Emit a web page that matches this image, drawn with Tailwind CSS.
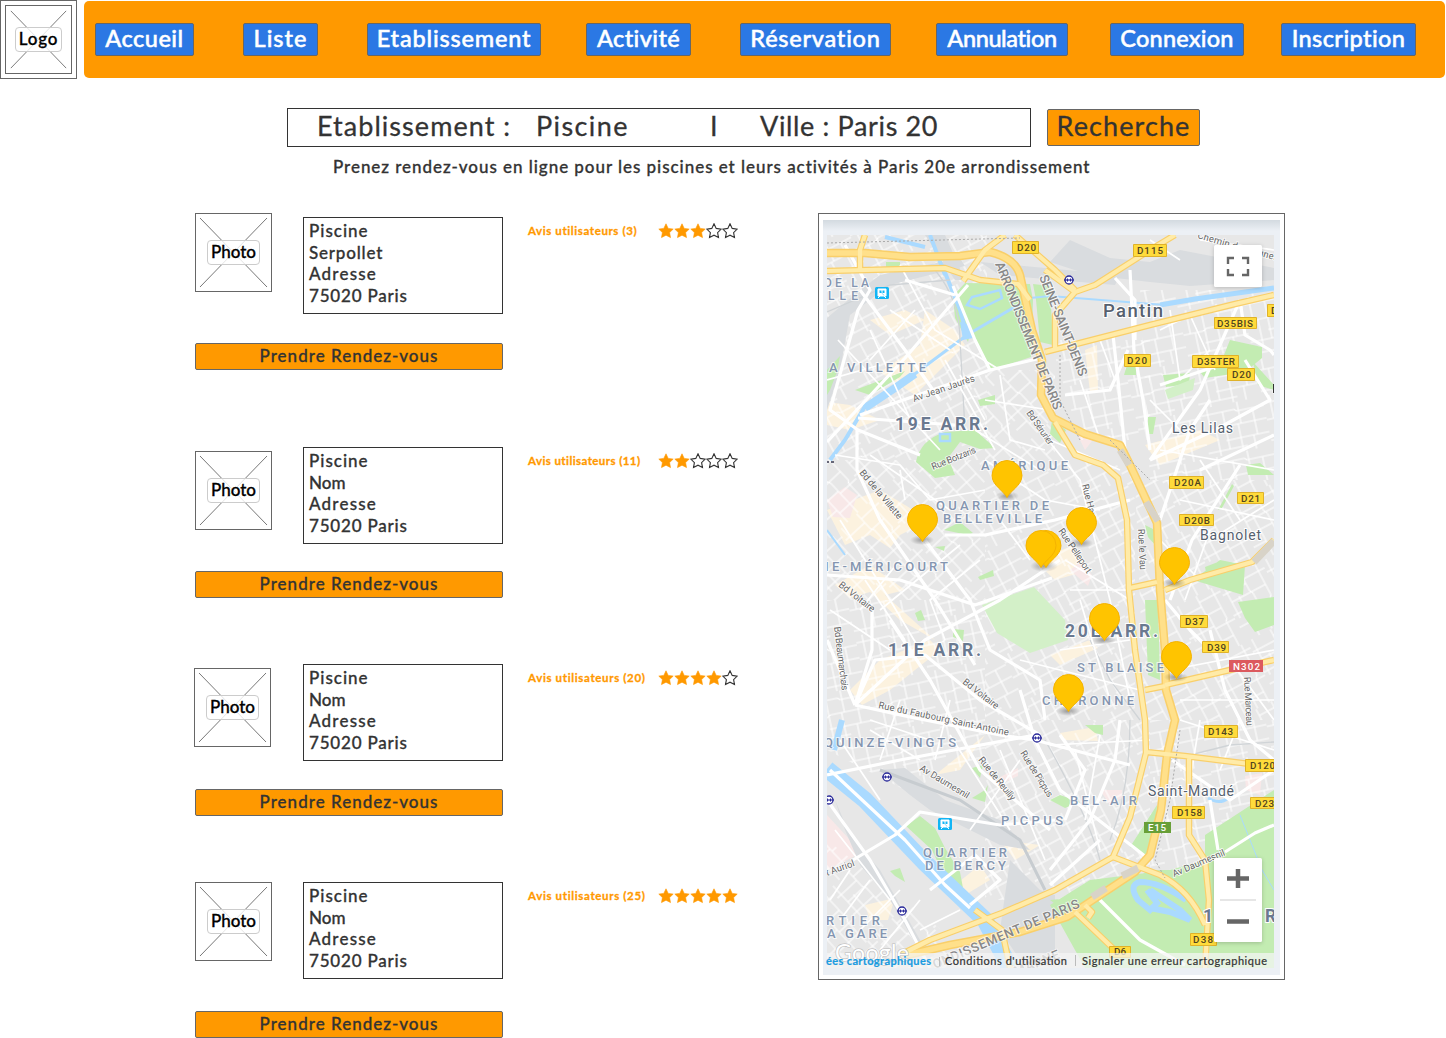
<!DOCTYPE html>
<html lang="fr">
<head>
<meta charset="utf-8">
<title>Piscines Paris 20</title>
<script src="https://cdn.jsdelivr.net/npm/@tailwindcss/browser@4"></script>
</head>
<body class="bg-white w-[1446px] h-[1038px] overflow-hidden font-['Lato',sans-serif] text-[#333] [-webkit-text-stroke:0.3px]">
<svg class="hidden"><defs>
  <path id="st" d="M8 .8l2.2 4.6 5 .7-3.6 3.5.9 5L8 12.200l-4.500 2.400.9-5L.8 6.100l5-.7z"/>
  <symbol id="full" viewBox="0 0 16 16"><use href="#st" fill="#ff9900" stroke="#ff9900" stroke-width=".6"/></symbol>
  <symbol id="empty" viewBox="0 0 16 16"><use href="#st" fill="#fff" stroke="#333" stroke-width="1.100"/></symbol>
</defs></svg>
<header class="flex h-[79px]">
  <div class="relative w-[77px] h-[79px] border border-[#666] p-1">
    <svg class="w-full h-full border border-[#666]" viewBox="5 5 67 69"><path d="M10 10L67 69M67 10L10 69" stroke="#777" stroke-width="1"/></svg>
    <span class="absolute left-[14px] top-[26px] w-[47px] h-[25px] rounded border border-[#ccc] bg-white/80 text-black font-medium text-[17px] leading-[21px] tracking-[0.8px] text-center">Logo</span>
  </div>
  <nav class="flex ml-[7px] mt-px w-[1361px] h-[77px] rounded-[5px] bg-[#ff9900] pl-[11px] pt-[22px] text-white font-medium text-[23.5px] leading-[29px] whitespace-nowrap text-center [-webkit-text-stroke:0.5px]">
    <a class="w-[99px] h-[33px] border border-[#666] rounded-[2px] bg-[#2b78e4] mr-[49px] tracking-[0.5px]">Accueil</a>
    <a class="w-[75px] h-[33px] border border-[#666] rounded-[2px] bg-[#2b78e4] mr-[49px] tracking-[1px]">Liste</a>
    <a class="w-[174px] h-[33px] border border-[#666] rounded-[2px] bg-[#2b78e4] mr-[45px] tracking-[0.8px]">Etablissement</a>
    <a class="w-[105px] h-[33px] border border-[#666] rounded-[2px] bg-[#2b78e4] mr-[49px] tracking-[0.4px]">Activité</a>
    <a class="w-[151px] h-[33px] border border-[#666] rounded-[2px] bg-[#2b78e4] mr-[45px] tracking-[0.75px]">Réservation</a>
    <a class="w-[132px] h-[33px] border border-[#666] rounded-[2px] bg-[#2b78e4] mr-[42px] tracking-[-0.4px]">Annulation</a>
    <a class="w-[134px] h-[33px] border border-[#666] rounded-[2px] bg-[#2b78e4] mr-[37px] tracking-[0.2px]">Connexion</a>
    <a class="w-[135px] h-[33px] border border-[#666] rounded-[2px] bg-[#2b78e4] tracking-[0.4px]">Inscription</a>
  </nav>
</header>
<section class="flex mt-[29px] ml-[287px] text-[27px] leading-[34px] whitespace-nowrap">
  <div class="flex w-[744px] h-[39px] border border-[#333] pl-[29px]">
    <span class="w-[219px] tracking-[1.050px]">Etablissement :</span>
    <span class="w-[174px] tracking-[1.4px]">Piscine</span>
    <span class="w-[50px]">I</span>
    <span class="tracking-[0.65px]">Ville : Paris 20</span>
  </div>
  <button class="ml-4 mt-px w-[153px] h-[37px] border border-[#666] rounded-[2px] bg-[#ff9900] leading-[30px] tracking-[1.1px]"><span class="block -mt-1">Recherche</span></button>
</section>
<p class="mt-[8px] ml-[333px] text-[17px] leading-6 tracking-[.955px] font-medium">Prenez rendez-vous en ligne pour les piscines et leurs activités à Paris 20e arrondissement</p>
<main class="flex pl-[194px] pt-[34px]">
  <div class="w-[624px] flex flex-col text-[17px] font-medium">
    <article class="h-[230px] pl-px">
      <div class="flex h-[130px]">
        <div class="relative w-[77px] h-[79px] border border-[#666]"><svg class="w-full h-full" viewBox="0 0 75 77"><path d="M4 4L71 73M71 4L4 73" stroke="#777"/></svg><span class="absolute left-[11px] top-[26px] w-[53px] h-[25px] rounded border border-[#ccc] bg-white/80 text-black leading-[21px] text-center">Photo</span></div>
        <div class="ml-[31px] mt-[4px] w-[200px] h-[97px] border border-[#333] pl-[5px] pt-[2px] leading-[21.700px]"><p class="tracking-[1px]">Piscine</p><p class="tracking-[.8px]">Serpollet</p><p class="tracking-[1.2px]">Adresse</p><p class="tracking-[.8px]">75020 Paris</p></div>
        <p class="ml-[25px] mt-[9px] w-[130px] text-[11.5px] leading-[17px] font-bold text-[#ff9900] tracking-[.6px]">Avis utilisateurs (3)</p>
        <div class="flex mt-[10px]"><svg class="w-4 h-4"><use href="#full"/></svg><svg class="w-4 h-4"><use href="#full"/></svg><svg class="w-4 h-4"><use href="#full"/></svg><svg class="w-4 h-4"><use href="#empty"/></svg><svg class="w-4 h-4"><use href="#empty"/></svg></div>
      </div>
      <button class="block w-[308px] h-[27px] border border-[#666] rounded-[2px] bg-[#ff9900] pb-[2px] leading-[22px] tracking-[1.020px]">Prendre Rendez-vous</button>
    </article>
    <article class="h-[217px] pl-px">
      <div class="flex h-[128px]">
        <div class="relative mt-[8px] w-[77px] h-[79px] border border-[#666]"><svg class="w-full h-full" viewBox="0 0 75 77"><path d="M4 4L71 73M71 4L4 73" stroke="#777"/></svg><span class="absolute left-[11px] top-[26px] w-[53px] h-[25px] rounded border border-[#ccc] bg-white/80 text-black leading-[21px] text-center">Photo</span></div>
        <div class="ml-[31px] mt-[4px] w-[200px] h-[97px] border border-[#333] pl-[5px] pt-[2px] leading-[21.700px]"><p class="tracking-[1px]">Piscine</p><p>Nom</p><p class="tracking-[1.2px]">Adresse</p><p class="tracking-[.8px]">75020 Paris</p></div>
        <p class="ml-[25px] mt-[9px] w-[130px] text-[11.5px] leading-[17px] font-bold text-[#ff9900] tracking-[.42px]">Avis utilisateurs (11)</p>
        <div class="flex mt-[10px]"><svg class="w-4 h-4"><use href="#full"/></svg><svg class="w-4 h-4"><use href="#full"/></svg><svg class="w-4 h-4"><use href="#empty"/></svg><svg class="w-4 h-4"><use href="#empty"/></svg><svg class="w-4 h-4"><use href="#empty"/></svg></div>
      </div>
      <button class="block w-[308px] h-[27px] border border-[#666] rounded-[2px] bg-[#ff9900] pb-[2px] leading-[22px] tracking-[1.020px]">Prendre Rendez-vous</button>
    </article>
    <article class="h-[218px]">
      <div class="flex h-[129px]">
        <div class="relative mt-[8px] w-[77px] h-[79px] border border-[#666]"><svg class="w-full h-full" viewBox="0 0 75 77"><path d="M4 4L71 73M71 4L4 73" stroke="#777"/></svg><span class="absolute left-[11px] top-[26px] w-[53px] h-[25px] rounded border border-[#ccc] bg-white/80 text-black leading-[21px] text-center">Photo</span></div>
        <div class="ml-[32px] mt-[4px] w-[200px] h-[97px] border border-[#333] pl-[5px] pt-[2px] leading-[21.700px]"><p class="tracking-[1px]">Piscine</p><p>Nom</p><p class="tracking-[1.2px]">Adresse</p><p class="tracking-[.8px]">75020 Paris</p></div>
        <p class="ml-[25px] mt-[9px] w-[130px] text-[11.5px] leading-[17px] font-bold text-[#ff9900] tracking-[.65px]">Avis utilisateurs (20)</p>
        <div class="flex mt-[10px]"><svg class="w-4 h-4"><use href="#full"/></svg><svg class="w-4 h-4"><use href="#full"/></svg><svg class="w-4 h-4"><use href="#full"/></svg><svg class="w-4 h-4"><use href="#full"/></svg><svg class="w-4 h-4"><use href="#empty"/></svg></div>
      </div>
      <button class="block ml-px w-[308px] h-[27px] border border-[#666] rounded-[2px] bg-[#ff9900] pb-[2px] leading-[22px] tracking-[1.020px]">Prendre Rendez-vous</button>
    </article>
    <article class="pl-px">
      <div class="flex h-[133px]">
        <div class="relative mt-[4px] w-[77px] h-[79px] border border-[#666]"><svg class="w-full h-full" viewBox="0 0 75 77"><path d="M4 4L71 73M71 4L4 73" stroke="#777"/></svg><span class="absolute left-[11px] top-[26px] w-[53px] h-[25px] rounded border border-[#ccc] bg-white/80 text-black leading-[21px] text-center">Photo</span></div>
        <div class="ml-[31px] mt-[4px] w-[200px] h-[97px] border border-[#333] pl-[5px] pt-[2px] leading-[21.700px]"><p class="tracking-[1px]">Piscine</p><p>Nom</p><p class="tracking-[1.2px]">Adresse</p><p class="tracking-[.8px]">75020 Paris</p></div>
        <p class="ml-[25px] mt-[9px] w-[130px] text-[11.5px] leading-[17px] font-bold text-[#ff9900] tracking-[.65px]">Avis utilisateurs (25)</p>
        <div class="flex mt-[10px]"><svg class="w-4 h-4"><use href="#full"/></svg><svg class="w-4 h-4"><use href="#full"/></svg><svg class="w-4 h-4"><use href="#full"/></svg><svg class="w-4 h-4"><use href="#full"/></svg><svg class="w-4 h-4"><use href="#full"/></svg></div>
      </div>
      <button class="block w-[308px] h-[27px] border border-[#666] rounded-[2px] bg-[#ff9900] pb-[2px] leading-[22px] tracking-[1.020px]">Prendre Rendez-vous</button>
    </article>
  </div>
  <svg class="w-[467px] h-[767px] shrink-0 [-webkit-text-stroke:0px]" viewBox="818 213 467 767" font-family="Roboto, sans-serif">
    <defs>
      <clipPath id="m"><rect x="827" y="235" width="447" height="733"/></clipPath>
      <linearGradient id="g" x1="0" y1="0" x2="0" y2="1"><stop offset="0" stop-color="#d3dae0"/><stop offset="1" stop-color="#ecf0f5"/></linearGradient>
      <radialGradient id="sh"><stop offset="0" stop-color="#000" stop-opacity=".35"/><stop offset="1" stop-color="#000" stop-opacity="0"/></radialGradient>
      <g id="net" fill="none" stroke="#fff" stroke-width="1.100"><path d="M0 7H34L36 9H64M0 24H20L24 22H64M20 36H64M0 45H40M7 0V24M22 7V45M38 0V22M35 22V50M52 9V36M12 24V50M48 36V50"/></g>
      <pattern id="a" width="64" height="50" patternUnits="userSpaceOnUse" patternTransform="rotate(-28)"><use href="#net"/></pattern>
      <pattern id="b" width="64" height="50" patternUnits="userSpaceOnUse" patternTransform="rotate(47)"><use href="#net"/></pattern>
      <pattern id="c" width="64" height="50" patternUnits="userSpaceOnUse" patternTransform="rotate(-12)"><use href="#net"/></pattern>
      <pattern id="d" width="64" height="50" patternUnits="userSpaceOnUse" patternTransform="rotate(62)"><use href="#net"/></pattern>
      <path id="pin" d="M0 21C-3 14.500-15 9-15-1A15 15 0 0 1 15-1C15 9 3 14.500 0 21Z" fill="#ffc400" stroke="#f5b301" stroke-width="1"/>
      <g id="metro"><circle r="4" fill="#fff" stroke="#2a2a9a" stroke-width="1.300"/><path d="M-5 0H5" stroke="#2a2a9a" stroke-width="1.200"/><path d="M-1.500-1.500V1.500M1.500-1.500V1.500" stroke="#2a2a9a"/></g>
      <g id="train"><rect x="-7" y="-6" width="14" height="12" rx="1.500" fill="#12b5f5"/><path d="M-4-4H4V3H2L4 5M-2 3L-4 5M-4-4V3H3" fill="#fff" stroke="#fff"/><path d="M-2.500-2.500H-.5V0H-2.500zM.5-2.500H2.500V0H.5z" fill="#12b5f5"/></g>
      <path id="h1" d="M827 253H865L910 257 960 256 990 252Q1015 258 1020 275L1032 330 1042 360 1041 395 1053 418 1085 434 1120 445 1130 465 1157 523 1160 590 1165 650 1166 690 1175 720 1167 755 1161 810 1150 855 1135 872 1067 917 1020 932 950 945 907 955"/>
      <path id="h2" d="M827 271L945 268 980 280 1018 284 1030 300M865 235L860 250V272M963 281L985 250 1005 235M1015 235L1055 270 1075 290M1045 270L1075 292 1095 285 1150 250 1175 235M1075 292L1055 315 1055 350M1045 352L1150 325 1235 304 1274 295M1055 422L1075 455 1103 465 1118 478 1127 520 1129 590 1135 650 1145 720 1146 753 1130 817 1113 857 1055 890 1002 913 930 940 900 955M1146 752L1185 756 1250 764 1274 766M1189 756V835L1205 860 1209 900 1205 968M1113 857L1160 875Q1190 890 1205 925M1165 590L1190 580 1252 562 1274 540M1130 588L1157 582M1165 685L1230 670 1274 660M1145 690L1165 686M1075 912L1120 955M1085 905L1092 912 1088 918M975 910L1002 930 1010 968"/>
    </defs>
    <rect x="818.500" y="213.500" width="466" height="766" fill="#fff" stroke="#666"/>
    <rect x="823" y="220" width="457" height="755" fill="#ecf0f5"/><rect x="823" y="220" width="457" height="11" fill="url(#g)"/>
    <g clip-path="url(#m)">
      <rect x="827" y="235" width="447" height="733" fill="#e7e7e7"/>
      <g fill="#fcf2df">
        <path d="M827 510L880 490 930 520 900 535 890 548 870 535 845 545zM925 310L955 330 965 345 915 395 880 372 920 345zM850 690L880 660 930 640 940 650 890 690 862 705zM1034 560L1075 545 1090 570 1055 580zM880 420L850 405 827 402V425L850 430zM985 735L935 775 960 770zM955 885L980 865 990 880 965 895zM865 905L895 898 888 920 870 920zM1145 445L1200 430 1220 440 1160 465zM1085 350L1097 345 1098 390 1090 392zM960 310L985 290 990 310 970 325zM1000 840L1040 845 1015 860zM1060 733L1095 727 1098 741 1063 740zM870 320L905 310 925 320 890 335zM835 585L870 565 905 590 885 595 935 640 900 620 870 592 850 598zM1050 655L1090 640 1098 648 1060 665z"/>
      </g>
      <g fill="#f8e8e8"><path d="M827 500L845 487 857 495 850 518 833 517zM1070 570L1080 562 1092 575 1088 586zM1078 436L1095 437 1085 450zM827 815L850 840 857 855 827 870zM1100 790H1122V798L1110 805zM1245 776L1262 773 1260 795 1246 790zM1000 777L1018 768V776L1000 784z"/></g>
      <rect x="827" y="235" width="160" height="225" fill="url(#a)"/>
      <path d="M827 460H985V600H827zM985 370H1055V460H985z" fill="url(#b)"/>
      <path d="M827 600H985V760L905 790 827 750zM1140 290H1274V480H1150z" fill="url(#c)"/>
      <path d="M985 460H1135V720H985z" fill="url(#a)"/>
      <path d="M985 720H1150V900H985zM1135 480H1274V720H1145z" fill="url(#d)"/>
      <path d="M827 840L990 968H827z" fill="url(#b)"/>
      <path d="M1050 340H1150V440H1080zM1150 720H1274V870H1150z" fill="url(#c)"/>
      <g fill="#d9dcdf"><path d="M827 318L860 290 880 275 960 258 965 266 890 285 850 315 840 370 827 410zM925 235H945L965 280 955 280zM980 262L1120 275 1115 285 1000 275zM1050 262L1070 240 1110 258 1150 262 1180 250 1274 268V280L1190 286 1150 282 1090 275zM880 770L905 768 945 800 1000 820 1030 850 1000 845 930 810 910 795zM1010 860L1040 890 1055 895 1055 968 1020 960 1000 930zM835 800L850 835 880 870 920 940 935 955 925 960 890 900 860 865 845 830z"/></g>
      <path d="M880 770L960 800 1020 840 1045 890" stroke="#c7ccd0" stroke-width="3" fill="none"/>
      <g fill="#c3ecb2">
        <path d="M965 283L1030 284 1033 300 1031 357 991 370 982 352 970 334 968 342 955 318 953 296zM916 462Q920 440 945 432L975 430 995 448 980 449 960 442 948 458 955 475 935 478zM827 370L840 356 837 372 830 390 827 395zM886 262H900V267H886zM1033 284L1050 286 1053 345 1040 342 1036 300zM1230 340L1262 347V358L1245 372 1205 378 1200 372 1220 365zM1253 362L1274 385V390L1258 385zM1163 375L1190 373 1189 384 1166 387zM1127 365H1136V375H1124zM1148 417H1156L1153 434H1147zM1218 510L1232 484 1234 486 1222 508zM1145 525L1155 530V545L1148 537zM1145 600H1158L1160 680 1148 675zM1193 580L1220 560 1245 565 1243 595zM1238 602L1274 597V625L1255 632 1245 618zM1205 567L1218 562V570L1206 572zM1246 465L1260 463 1274 475 1248 475zM944 530L960 522 973 533 968 535zM935 547L945 546 944 551zM978 577L993 570 994 576 980 580zM915 613L921 610 925 620 918 621zM953 629L964 630 963 641 953 637zM906 826L920 816 935 828 945 848 960 872 963 888 945 878 932 850zM890 871L900 868 905 882 895 876zM972 768L983 765 980 778zM985 790L988 785 985 802 972 798zM1050 800L1060 795 1080 802 1065 808zM1130 847L1157 805 1155 845 1145 855zM1085 725H1103V735L1095 733zM855 390L905 371 900 377 870 395zM1205 835L1274 790V968H1085L1050 905 1090 880 1170 870 1205 860zM1052 420L1066 430 1060 443 1050 434zM978 400L995 395V404L980 406zM1050 900L1100 895 1150 870 1210 870V968H1140z"/>
      </g>
      <path d="M982 605L1034 587 1065 620 1068 640 1030 653 997 633zM1165 390L1195 378 1193 390 1168 399z" fill="#d3f0c8"/>
      <g fill="none" stroke="#aadaff">
        <path d="M827 769L865 800 925 863 985 920 1010 968" stroke-width="17"/>
        <path d="M865 408L895 388 915 374" stroke-width="8"/><path d="M912 376L967 335 1018 305" stroke-width="3"/>
        <path d="M867 403L845 440 830 460" stroke-width="4"/><path d="M942 265L960 310 967 335M885 237L925 247M930 235L945 275" stroke-width="4"/>
        <path d="M1030 298L1050 296 1165 305" stroke-width="2"/><path d="M1160 305L1195 299 1274 288" stroke-width="5"/>
        <path d="M967 305L972 297 1000 290 1002 298 980 309zM940 434H950V441H940z" stroke-width="2.500"/>
        <path d="M827 530L845 555" stroke-width="2"/><path d="M834 750L842 720" stroke-width="6"/>
        <path d="M1186 900Q1160 882 1140 882 1128 885 1138 900L1150 910 1157 903 1147 890M1150 890L1180 910 1190 920 1170 912 1150 908" stroke-width="6"/>
        <path d="M1208 798Q1220 805 1228 798" stroke-width="3"/><path d="M1240 815L1250 840 1262 870 1274 890" stroke-width="1"/>
      </g>
      <path d="M960 322L971 325 973 338 963 340z" fill="#aadaff"/>
      <g fill="none" stroke="#d0d4d7" stroke-width="1.300"><path d="M827 312L890 285 950 280M935 270Q960 300 960 340L965 430M1090 640L1110 680 1140 720M1045 740Q1090 820 1100 860M1170 760L1230 745 1274 742M1130 720Q1130 790 1110 840"/></g>
      <g fill="none" stroke="#fff" stroke-linejoin="round">
        <g stroke-width="3.200"><path d="M827 442L905 358 968 285M858 418L955 425M857 430V470L880 520 935 600 975 665M845 245L870 290 858 310 830 410 858 430 920 455M860 290L905 350 940 400M905 280L955 295M953 286L975 340 990 370 1045 357M990 370L860 415M925 540L970 600 990 650 1040 680 1045 720M827 575L900 580 975 605 1052 578M945 535L985 535 1055 520 1130 500M855 705L925 640 1000 600 1060 560M855 705L905 716 1000 735 1035 740M855 705L875 660 925 655 980 700 1040 735M855 705L872 650V610M855 705L827 640M1035 740L1130 765M1035 740L1020 690M827 775L900 760 1035 735M1035 740L1060 790 1150 860"/>
        <path d="M830 770L905 840 945 885 970 908M853 860L895 835 920 812 1000 825 1055 820M930 890L975 855 1000 880 970 905M827 800L870 860 905 920 930 968M890 620L930 680 980 770 1050 830M1130 270L1134 350 1143 400 1150 450M1113 335L1118 380 1125 450M1065 395L1110 390 1128 350M1150 460L1200 390 1240 300M1240 300L1245 335 1270 350 1274 355M1245 360L1270 400 1215 430 1150 460M1200 470L1274 435M1210 400L1190 430 1160 520M1160 385L1220 365M1115 278L1135 300V340M1170 600L1192 540 1240 465M1165 600L1190 630 1210 650M1210 630L1225 690 1250 740 1274 760M1172 760L1230 800 1274 770M1210 800L1218 850M1225 852L1255 833 1274 825M1050 870L1090 820 1115 760 1120 720M1050 885L1100 840M1060 735L1085 770 1065 820M1095 895L1140 940 1185 965"/></g>
        <g stroke-width="1.700"><path d="M827 380L880 365M838 340L940 450M870 330L915 430M900 265L935 330 1000 370M890 310L950 350M915 310L870 360M945 360L995 450M960 375L985 420M975 430L1040 470M985 400L1050 410M1000 375L1010 440 1045 450M835 455L900 465 930 500 985 490M870 455L950 510M985 460L1045 500 1100 510M1040 430L1080 480 1110 600 1130 700M1050 440L1120 470M1000 520L1030 560M1065 560L1130 600M1070 590L1130 590M1080 600L1110 700M1060 650L1130 640M1020 660L1140 690M840 520L890 600 920 650M865 580L905 640M830 610L890 650M900 560L860 610M960 545L880 610M980 560L930 600 945 640M900 470L905 500M870 720L930 740M900 700L880 760M950 700L935 760M840 740L880 800M870 730L920 760M1050 745L1150 740M1000 750L1045 860M1020 760L970 830M950 735L1010 830M1075 750L1100 850M1100 735L1085 820M835 830L890 900M850 870L830 900M870 880L840 920M900 890L860 930M920 900L880 950M960 910L920 930M1080 380L1100 440M1100 340L1115 380M1150 400L1180 430M1170 310L1180 380 1210 350M1160 330L1180 320M1190 315L1215 370M1160 450L1274 470M1180 500L1274 520M1200 460L1240 520M1210 540L1274 500M1160 540L1200 580M1185 600L1210 530M1170 670L1274 650M1180 700L1274 700M1230 660L1274 720M1180 720L1274 750M1200 720L1190 780M1240 720L1220 770M1150 240L1180 260M1200 240L1274 250"/></g>
      </g>
      <g fill="none" stroke="#f9cf6a" stroke-linejoin="round"><use href="#h1" stroke-width="8.500"/><use href="#h2" stroke-width="6.500"/></g>
      <g fill="none" stroke-linejoin="round"><use href="#h1" stroke="#ffe08a" stroke-width="5.500"/><use href="#h2" stroke="#ffeba8" stroke-width="4.200"/></g>
      <path d="M1120 450L1129 465M1146 502L1158 521M1254 562L1274 541M1122 876L1138 868M1092 897L1106 888" stroke="#d8d3c8" stroke-width="7"/>
      <path d="M827 243L1020 238M1060 355V400L1080 440M1110 440L1150 480M1180 730L1170 800 1155 860 1165 878" stroke="#aaa" stroke-dasharray="2 2" fill="none"/>

      <g fill="#8495b0" font-size="13" font-weight="500" stroke="#fff" stroke-width="2" stroke-opacity=".7" paint-order="stroke">
        <text x="824" y="287" font-size="12" textLength="45">DE LA</text><text x="828" y="300" font-size="12" textLength="30">LLE</text>
        <text x="829" y="371.500" textLength="97">A VILLETTE</text><text x="981" y="470" textLength="87">AMÉRIQUE</text>
        <text x="936" y="510" textLength="113">QUARTIER DE</text><text x="943" y="522.500" textLength="99">BELLEVILLE</text>
        <text x="825" y="570.500" textLength="123">IE-MÉRICOURT</text><text x="1077" y="671.500" textLength="87">ST BLAISE</text>
        <text x="1042" y="704.500" textLength="92">CHARONNE</text><text x="824" y="746.500" textLength="132">QUINZE-VINGTS</text>
        <text x="1070" y="804.500" textLength="67">BEL-AIR</text><text x="1001" y="824.500" textLength="62">PICPUS</text>
        <text x="923" y="857" textLength="84">QUARTIER</text><text x="925" y="869.500" textLength="81">DE BERCY</text>
        <text x="826" y="925" textLength="54">RTIER</text><text x="827" y="937.500" textLength="60">A GARE</text>
      </g>
      <g fill="#6a7990" font-size="17.500" font-weight="700" stroke="#fff" stroke-width="2" paint-order="stroke">
        <text x="895" y="429.500" textLength="93">19E ARR.</text><text x="888" y="656" textLength="93">11E ARR.</text><text x="1065" y="637" textLength="93">20E ARR.</text><text x="1203" y="922">1</text><text x="1265" y="922">R</text>
      </g>
      <g fill="#55606e" font-size="14" stroke="#fff" stroke-width="2" paint-order="stroke">
        <text x="1103" y="317" font-size="18.500" font-weight="500" textLength="60">Pantin</text><text x="1172" y="433" textLength="61">Les Lilas</text><text x="1200" y="540" textLength="61">Bagnolet</text><text x="1148" y="796" textLength="86">Saint-Mandé</text>
      </g>
      <g fill="#666" font-size="9.500" stroke="#fff" stroke-width="1.800" stroke-opacity=".8" paint-order="stroke">
        <text transform="translate(914 402) rotate(-19)" textLength="65">Av Jean Jaurès</text>
        <text transform="translate(933 470) rotate(-22)" textLength="47">Rue Botzaris</text>
        <text transform="translate(1026 413) rotate(55)" textLength="40">Bd Sérurier</text>
        <text transform="translate(859 473) rotate(50)" textLength="61">Bd de la Villette</text>
        <text transform="translate(838 586) rotate(38)" textLength="43">Bd Voltaire</text>
        <text transform="translate(834 627) rotate(83)" textLength="64">Bd Beaumarchais</text>
        <text transform="translate(962 683) rotate(38)" textLength="43">Bd Voltaire</text>
        <text transform="translate(878 708) rotate(12)" textLength="133">Rue du Faubourg Saint-Antoine</text>
        <text transform="translate(919 770) rotate(31)" textLength="56">Av Daumesnil</text>
        <text transform="translate(978 760) rotate(51)" textLength="53">Rue de Reuilly</text>
        <text transform="translate(1020 753) rotate(58)" textLength="53">Rue de Picpus</text>
        <text transform="translate(1082 485) rotate(76)" textLength="39">Rue Haxo</text>
        <text transform="translate(1058 531) rotate(56)" textLength="52">Rue Pelleport</text>
        <text transform="translate(1138 529) rotate(87)" textLength="41">Rue le Vau</text>
        <text transform="translate(1244 677) rotate(87)" textLength="49">Rue Marceau</text>
        <text transform="translate(827 876) rotate(-20)" textLength="30">t Auriol</text>
        <text transform="translate(1174 877) rotate(-23)" textLength="56">Av Daumesnil</text>
        <text transform="translate(1197 238) rotate(16)" textLength="84">Chemin des Vignes</text>
      </g>
      <g fill="#888" font-size="13" font-weight="500" stroke="#fff" stroke-width="1.800" paint-order="stroke" stroke-opacity=".7">
        <text transform="translate(995 264) rotate(68)" textLength="158">ARRONDISSEMENT DE PARIS</text><text transform="translate(1039 277) rotate(68)" textLength="108">SEINE-SAINT-DENIS</text>
        <text transform="translate(935 969) rotate(-23)" textLength="158">ONDISSEMENT DE PARIS</text><text transform="translate(1016 976) rotate(-22)" textLength="48">MARNE</text>
      </g>
      <g fill="#ffdb3b" stroke="#dfb22a"><path d="M1012.500 241.500h26v12h-26zM1133.500 244.500h33v12h-33zM1214.500 317.500h42v11h-42zM1267.500 304.500h12v12h-12zM1124.500 354.500h26v12h-26zM1192.500 355.500h46v12h-46zM1227.500 368.500h27v12h-27zM1169.500 476.500h34v12h-34zM1237.500 492.500h26v11h-26zM1179.500 514.500h34v11h-34zM1180.500 615.500h27v12h-27zM1202.500 641.500h26v11h-26zM1204.500 725.500h33v12h-33zM1245.500 759.500h34v12h-34zM1250.500 797.500h27v11h-27zM1172.500 806.500h32v12h-32zM1190.500 933.500h26v12h-26zM1109.500 946.500h21v11h-21z"/></g>
      <path d="M1229 660h34v12h-34z" fill="#dc5a5e"/><path d="M1144 822h27v11h-27z" fill="#689f38"/>
      <g fill="#4f4420" font-size="9.800" font-weight="500">
        <text x="1017" y="251" textLength="19">D20</text><text x="1137" y="254" textLength="26">D115</text><text x="1217" y="326.500" textLength="36">D35BIS</text><text x="1271" y="314">D</text><text x="1127" y="364" textLength="20">D20</text><text x="1197" y="365" textLength="38">D35TER</text><text x="1232" y="378" textLength="19">D20</text><text x="1174" y="486" textLength="27">D20A</text><text x="1241" y="501.500" textLength="19">D21</text><text x="1184" y="523.500" textLength="26">D20B</text><text x="1185" y="625" textLength="19">D37</text><text x="1207" y="650.500" textLength="19">D39</text><text x="1208" y="735" textLength="25">D143</text><text x="1250" y="769" textLength="25">D120</text><text x="1255" y="806.500" textLength="19">D23</text><text x="1177" y="816" textLength="25">D158</text><text x="1193" y="943" textLength="20">D38</text><text x="1114" y="955">D6</text>
        <g fill="#fff"><text x="1233" y="669.500" textLength="27">N302</text><text x="1148" y="831" textLength="18">E15</text></g>
      </g>
      <path d="M1273 384h1v9h-1z" fill="#333"/><path d="M827 461h2v2h-2zM831 461h3v2h-3z" fill="#667"/>
      <use href="#metro" x="1069" y="280"/><use href="#metro" x="1037" y="738"/><use href="#metro" x="887" y="777"/><use href="#metro" x="829" y="800"/><use href="#metro" x="902" y="911"/>
      <use href="#train" x="882" y="293"/><use href="#train" x="945" y="824"/>
      <g fill="url(#sh)"><ellipse cx="1007" cy="496" rx="12" ry="5"/><ellipse cx="922" cy="540" rx="12" ry="5"/><ellipse cx="1081" cy="543" rx="12" ry="5"/><ellipse cx="1044" cy="566" rx="14" ry="6"/><ellipse cx="1174" cy="583" rx="12" ry="5"/><ellipse cx="1104" cy="640" rx="12" ry="5"/><ellipse cx="1176" cy="677" rx="12" ry="5"/><ellipse cx="1068" cy="711" rx="12" ry="5"/></g>
      <use href="#pin" x="1007" y="476.500"/><use href="#pin" x="922.500" y="520.500"/><use href="#pin" x="1081.500" y="523.500"/><use href="#pin" x="1046" y="546.500"/><use href="#pin" x="1041" y="546.500"/><use href="#pin" x="1174.500" y="563.500"/><use href="#pin" x="1104.500" y="619.500"/><use href="#pin" x="1176.500" y="657.500"/><use href="#pin" x="1068.500" y="690.500"/>
      <rect x="827" y="953" width="447" height="15" fill="#f5f5f5" fill-opacity=".72"/>
      <text x="835" y="961" font-family="Lato" font-size="23" fill="#fff" stroke="#bbb" stroke-width="1.200" paint-order="stroke" textLength="74">Google</text>
    </g>
    <g font-family="Lato" font-size="11" fill="#333" stroke="#333" stroke-width=".2"><text x="826" y="965" textLength="105" fill="#1a9be0" stroke="#1a9be0" font-weight="700">ées cartographiques</text><text x="945" y="965" textLength="122">Conditions d'utilisation</text><text x="1082" y="965" textLength="185">Signaler une erreur cartographique</text></g>
    <path d="M939.500 957v9M1075.500 955v11" stroke="#bbb"/>
    <g fill="#fff"><rect x="1214" y="245" width="48" height="42" rx="1.500" style="filter:drop-shadow(0 1px 2px #0003)"/><rect x="1214" y="858" width="48" height="84" rx="1.500" style="filter:drop-shadow(0 1px 2px #0003)"/></g>
    <path d="M1228 264V258H1234M1242 258H1248V264M1248 269V275H1242M1234 275H1228V269" fill="none" stroke="#666" stroke-width="2.400"/>
    <path d="M1227 878.500H1249M1238 869V888M1227 921.500H1249" stroke="#666" stroke-width="4.500"/><path d="M1220 900H1256" stroke="#e6e6e6" stroke-width="2"/>
  </svg>
</main>
</body>
</html>
